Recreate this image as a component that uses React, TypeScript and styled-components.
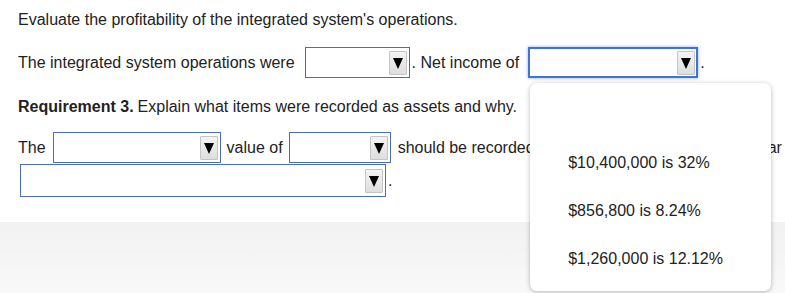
import React from "react";
import styled, { createGlobalStyle } from "styled-components";

const GlobalStyle = createGlobalStyle`
  html, body {
    margin: 0;
    padding: 0;
    background: #fff;
    overflow: hidden;
  }
  body {
    font-family: "Liberation Sans", Arial, sans-serif;
    font-size: 16px;
    color: #222;
  }
`;

const Page = styled.div`
  width: 785px;
  height: 293px;
  display: flex;
  flex-direction: column;
`;

const Content = styled.div`
  height: 222px;
  box-sizing: border-box;
  padding: 10px 0 0 18px;
  background: #fff;
  white-space: nowrap;
`;

const Footer = styled.div`
  flex: 1;
  background: linear-gradient(#f1f1f1, #f9f9f9);
`;

const Line = styled.div<{ top: number; h?: number }>`
  display: flex;
  align-items: center;
  height: ${(p) => p.h ?? 20}px;
  margin-top: ${(p) => p.top}px;
  line-height: 20px;
`;

const Bold = styled.b`
  font-weight: bold;
  margin-right: 4px;
`;

const Gap = styled.span<{ w: number }>`
  display: inline-block;
  width: ${(p) => p.w}px;
`;

const Anchor = styled.div`
  position: relative;
  display: flex;
`;

const SelectBox = styled.div<{ w: number; h?: number; focused?: boolean }>`
  width: ${(p) => p.w}px;
  height: ${(p) => p.h ?? 31}px;
  box-sizing: border-box;
  background: #fff;
  border: ${(p) => (p.focused ? "2px solid #3d74d6" : "1px solid #4a6db5")};
  box-shadow: ${(p) => (p.focused ? "0 0 3px rgba(61, 116, 214, 0.6)" : "none")};
  display: flex;
  align-items: center;
  justify-content: flex-end;
  padding-right: ${(p) => (p.focused ? 1 : 2)}px;
`;

const ArrowButton = styled.div`
  width: 18px;
  height: 24px;
  box-sizing: border-box;
  border: 1px solid #c4c4c4;
  border-radius: 1px;
  background: linear-gradient(#f4f4f4, #dedede);
  display: flex;
  align-items: center;
  justify-content: center;
`;

const Triangle = styled.span`
  width: 0;
  height: 0;
  border-left: 5px solid transparent;
  border-right: 5px solid transparent;
  border-top: 11px solid #000;
  margin-top: 1px;
`;

const Menu = styled.div`
  position: absolute;
  left: 2px;
  top: 36px;
  width: 241px;
  box-sizing: border-box;
  padding: 8px 0;
  background: #fff;
  border-radius: 7px;
  box-shadow: 0 1px 5px rgba(0, 0, 0, 0.28);
  z-index: 10;
`;

const Option = styled.div`
  height: 48px;
  display: flex;
  align-items: center;
  padding-left: 38px;
  font-size: 16px;
  color: #222;
`;

const Select = ({ w, h, focused }: { w: number; h?: number; focused?: boolean }) => (
  <SelectBox w={w} h={h} focused={focused}>
    <ArrowButton>
      <Triangle />
    </ArrowButton>
  </SelectBox>
);

const options = ["", "$10,400,000 is 32%", "$856,800 is 8.24%", "$1,260,000 is 12.12%"];

export default function App() {
  return (
    <Page>
      <GlobalStyle />
      <Content>
        <Line top={0}>Evaluate the profitability of the integrated system's operations.</Line>
        <Line top={17} h={31}>
          The integrated system operations were
          <Gap w={10} />
          <Select w={105} />
          <Gap w={2} />. Net income of
          <Gap w={9} />
          <Anchor>
            <Select w={170} focused />
            <Menu>
              {options.map((o, i) => (
                <Option key={i}>{o}</Option>
              ))}
            </Menu>
          </Anchor>
          <Gap w={2} />.
        </Line>
        <Line top={19}>
          <Bold>Requirement 3.</Bold> Explain what items were recorded as assets and why.
        </Line>
        <Line top={15} h={31}>
          The
          <Gap w={7} />
          <Select w={168} />
          <Gap w={6} />value of
          <Gap w={6} />
          <Select w={102} />
          <Gap w={7} />should be recorded as assets because they are yes ar
        </Line>
        <Line top={1} h={33}>
          <Gap w={2} />
          <Select w={366} h={33} />
          <Gap w={2} />.
        </Line>
      </Content>
      <Footer />
    </Page>
  );
}
